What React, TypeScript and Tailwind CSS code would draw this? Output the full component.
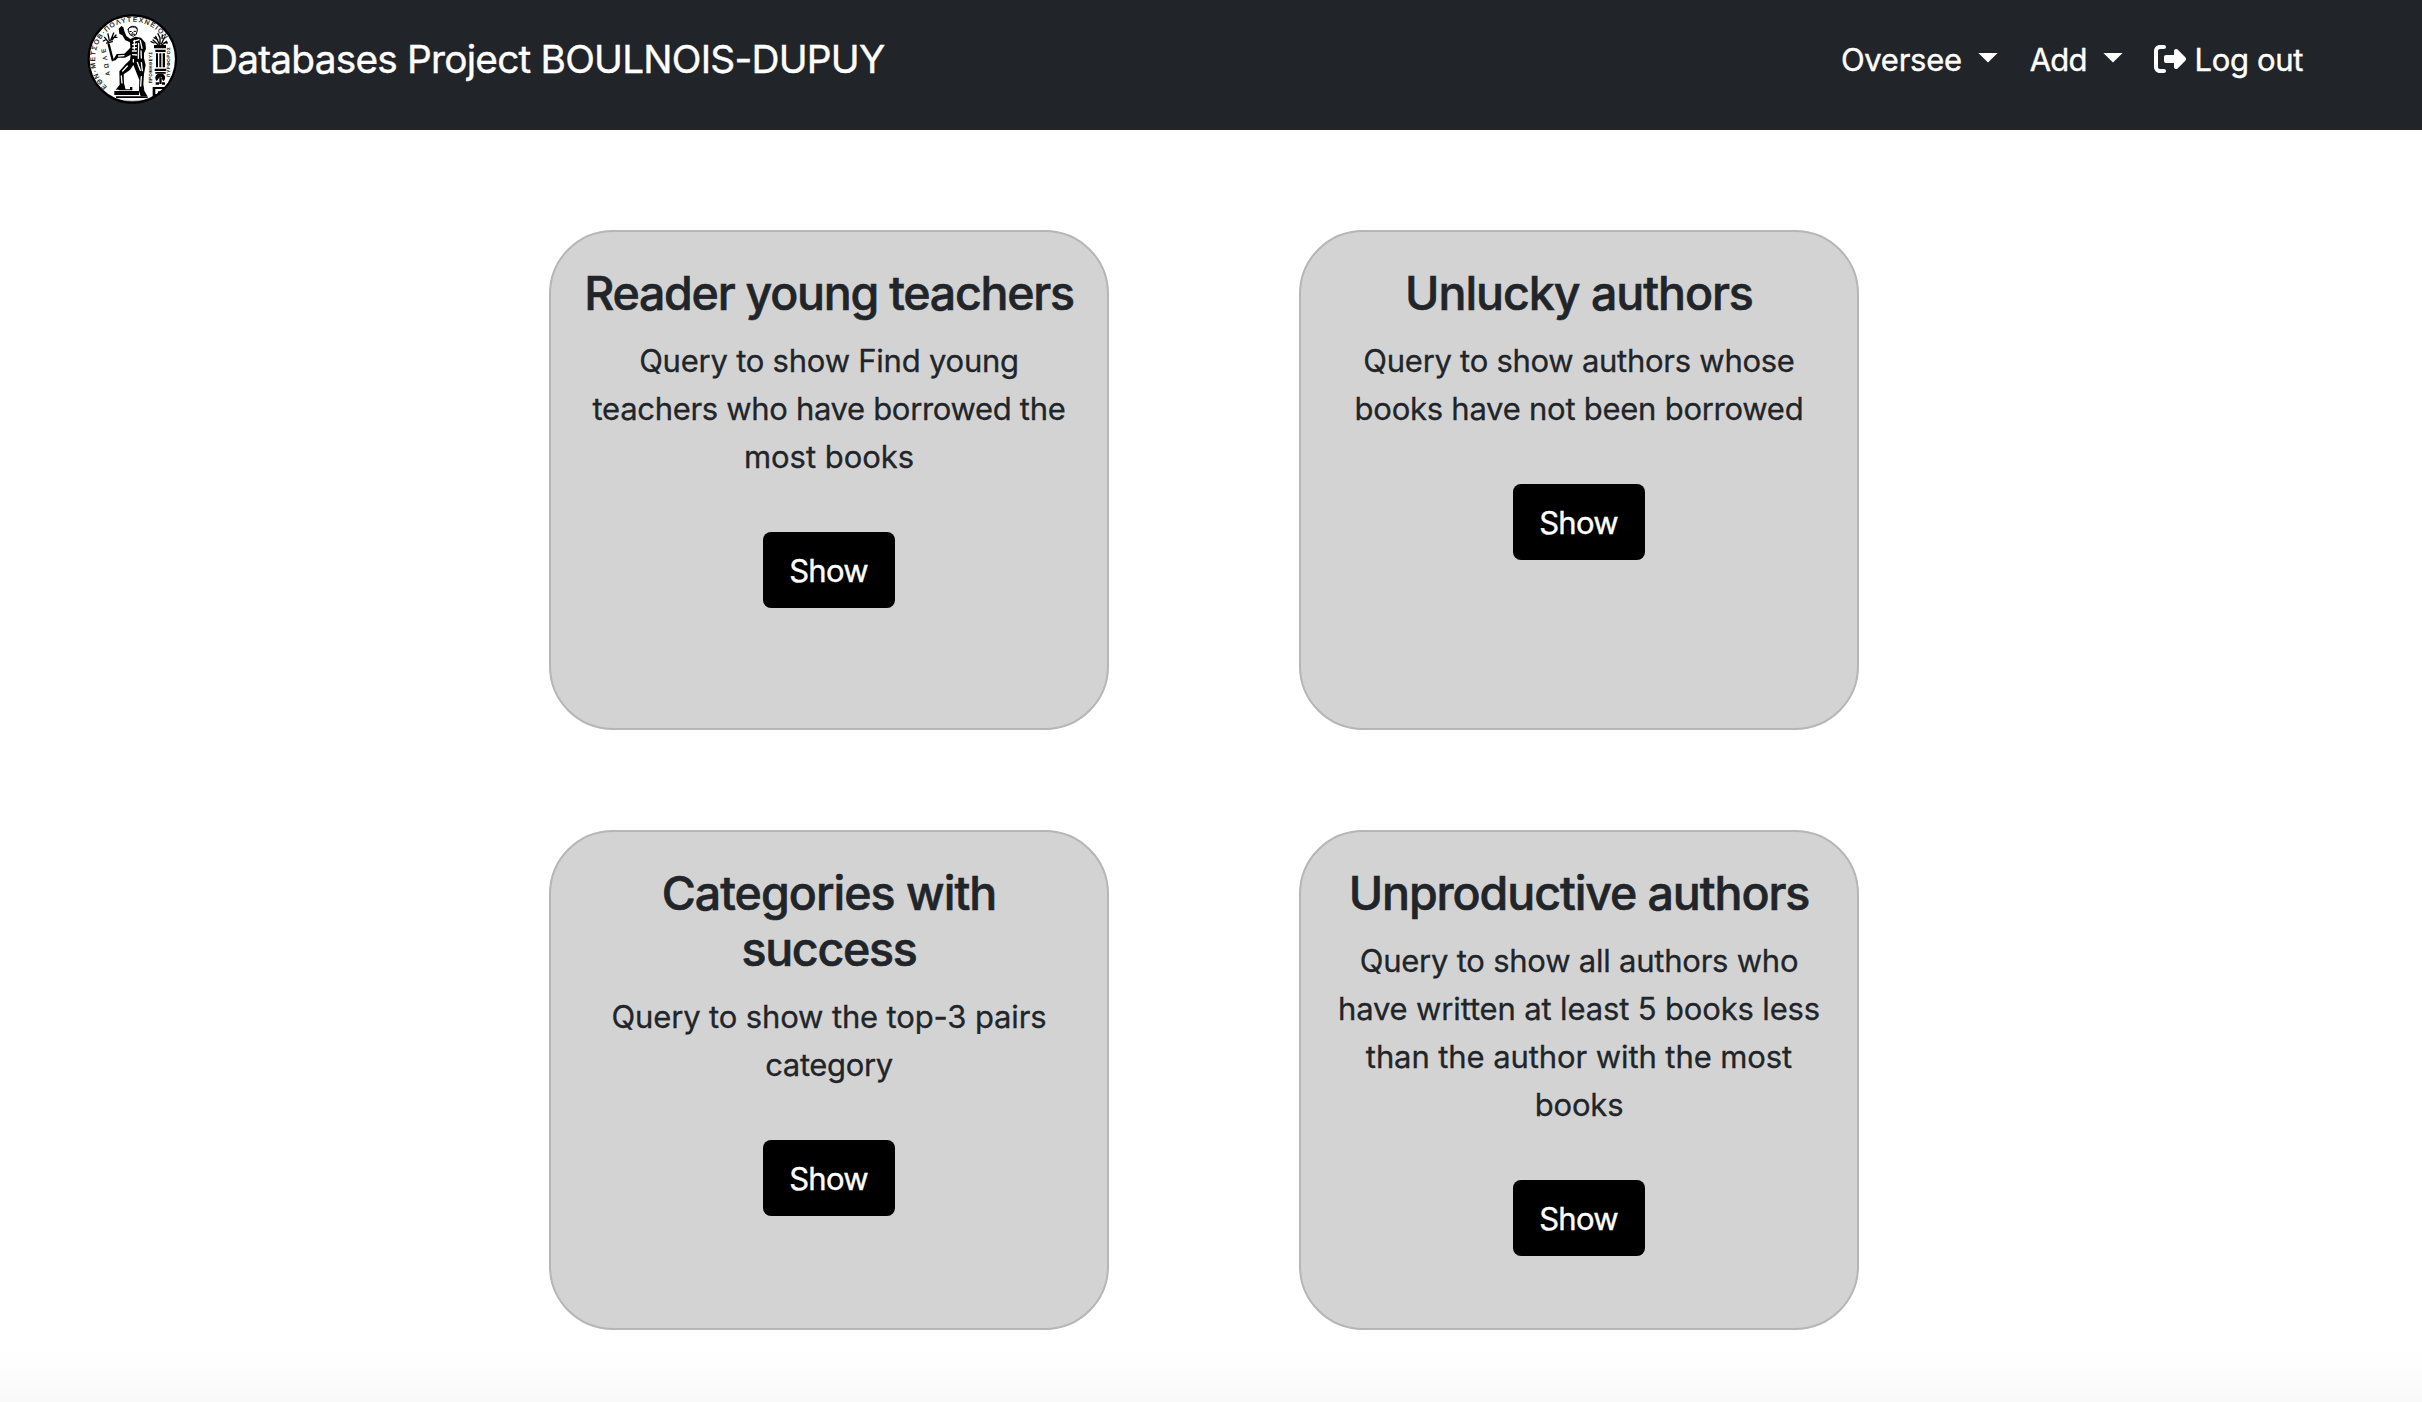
import { FaRightFromBracket } from "react-icons/fa6";

type Line = { text: string; tracking: string };
type Card = { title: Line[]; body: Line[] };

const cards: Card[] = [
  {
    title: [{ text: "Reader young teachers", tracking: "tracking-[-1.25px]" }],
    body: [
      { text: "Query to show Find young", tracking: "tracking-[-0.23px]" },
      { text: "teachers who have borrowed the", tracking: "tracking-[-0.32px]" },
      { text: "most books", tracking: "tracking-[-0.03px]" },
    ],
  },
  {
    title: [{ text: "Unlucky authors", tracking: "tracking-[-1.05px]" }],
    body: [
      { text: "Query to show authors whose", tracking: "tracking-[-0.27px]" },
      { text: "books have not been borrowed", tracking: "tracking-[-0.25px]" },
    ],
  },
  {
    title: [
      { text: "Categories with", tracking: "tracking-[-0.97px]" },
      { text: "success", tracking: "tracking-[-1.27px]" },
    ],
    body: [
      { text: "Query to show the top-3 pairs", tracking: "tracking-[-0.14px]" },
      { text: "category", tracking: "tracking-[-0.37px]" },
    ],
  },
  {
    title: [{ text: "Unproductive authors", tracking: "tracking-[-1.09px]" }],
    body: [
      { text: "Query to show all authors who", tracking: "tracking-[-0.23px]" },
      { text: "have written at least 5 books less", tracking: "tracking-[-0.15px]" },
      { text: "than the author with the most", tracking: "tracking-[-0.09px]" },
      { text: "books", tracking: "tracking-[-0.17px]" },
    ],
  },
];

function Seal() {
  return (
    <svg viewBox="21 39 270 276" className="h-[92px] w-[90px] shrink-0" aria-label="University seal">
      <defs>
        <path id="ring" d="M 81 261 A 113 113 0 1 1 259 128" />
        <clipPath id="disc">
          <circle cx="157" cy="177" r="130" />
        </clipPath>
      </defs>
      <circle cx="157" cy="177" r="131" fill="#fff" stroke="#000" strokeWidth="6.5" />
      <g clipPath="url(#disc)">
        <g fill="#111" fontFamily="Liberation Sans, sans-serif" stroke="#111" strokeWidth="0.6">
          <text fontSize="20">
            <textPath href="#ring" textLength="385" lengthAdjust="spacing">ΕΘΝ·ΜΕΤΣΟΒ·ΠΟΛΥΤΕΧΝΕΙΟΝ</textPath>
          </text>
          <text fontSize="18" transform="translate(90 226) rotate(-100)" textLength="82">ΑΩΛΕ</text>
          <text fontSize="12" transform="translate(217 250) rotate(-90)" textLength="94">ΠΡΟΜΗΘΕΥΣ</text>
          <text fontSize="13" transform="translate(270 230) rotate(-90)" textLength="88">ΠΥΡΦΟΡΟΣ</text>
        </g>
        {/* torch held in the outstretched hand */}
        <g fill="none" stroke="#000" strokeLinecap="round">
          <path d="M86 133 L98 180" strokeWidth="7" />
          <path d="M80 129 L97 125 M84 125 L74 112 M88 122 L84 102 M92 121 L101 99 M96 120 L108 105 M76 120 L70 123 M98 112 L111 112" strokeWidth="4" />
        </g>
        {/* Prometheus */}
        <path d="M145 86 Q156 74 170 82 L172 90 L169 103 L160 109 L150 104 L145 94 Z" fill="#fff" stroke="#000" strokeWidth="3" />
        <path d="M143 88 Q155 74 172 86 M148 95 L155 94 M161 94 L168 94 M152 102 L166 103 M158 96 L158 100" fill="none" stroke="#000" strokeWidth="3" />
        <path d="M116 86 L124 78 L130 82 L133 93 L139 108 L151 117 L166 110 L183 113 L196 128 L198 146 L192 160 L192 175 L197 195 L192 222 L190 252 L193 272 L202 288 L182 289 L177 273 L178 240 L167 212 L160 195 L150 210 L131 223 L132 250 L137 269 L107 269 L119 254 L118 214 L137 192 L150 180 L152 164 L135 173 L114 173 L105 182 L99 180 L110 162 L133 161 L151 143 L150 127 L136 121 L127 106 L118 101 Z" fill="#000" />
        <g fill="none" stroke="#fff" strokeWidth="4" strokeLinecap="round">
          <path d="M161 124 L177 119 M158 134 L170 132 M181 122 L186 145 M158 144 L169 143 M157 153 L169 153 M158 164 L170 165 M176 130 L175 175 M183 153 L184 174 M163 121 L163 148" />
          <path d="M160 178 L160 186 M172 187 L181 211 M184 188 L187 212 M184 230 L182 258 M142 198 L128 213 M124 228 L126 249 M116 168 L132 167" />
        </g>
        {/* plinth */}
        <path d="M119 259 H132 V268 H150 V261 H157 V271 H116 Z M103 273 H177 V285 H103 Z M108 289 H203 V294 H108 Z" fill="#000" />
        {/* altar with flames */}
        <g fill="none" stroke="#000" strokeWidth="4" strokeLinecap="round">
          <path d="M234 134 L219 120 M238 133 L227 109 M240 132 L240 114 L234 101 M244 132 L253 113 M247 134 L260 124 M222 129 L213 125 M233 119 L222 113 M246 116 L247 105 M252 128 L262 129" />
        </g>
        <path d="M222 135 H258 V145 H222 Z M226 149 H257 V156 H226 Z M228 160 H234 V202 H228 Z M238 160 H244 V202 H238 Z M248 160 H255 V202 H248 Z M224 206 H259 V213 H224 Z M226 216 H257 V221 H226 Z" fill="#000" />
        <path d="M233 221 Q220 231 230 244 L240 230 L251 244 Q261 231 249 221 Z M238 232 H245 V252 H238 Z M227 247 H237 V254 H227 Z M246 247 H255 V254 H246 Z" fill="#000" />
        <path d="M218 290 V261 H254 V267 H226 V283 H234 V274 H247 V280 H240 V290 Z" fill="#000" />
        <path d="M102 299 Q157 309 212 299" fill="none" stroke="#000" strokeWidth="2" />
      </g>
    </svg>
  );
}

function Caret() {
  return (
    <svg viewBox="0 0 20 10" className="mb-[3px] ml-4 h-[10px] w-5 fill-white">
      <path d="M0.4 0 H19.6 L10 9.6 Z" />
    </svg>
  );
}

function QueryCard({ title, body }: Card) {
  return (
    <section className="flex h-[500px] w-[560px] flex-col items-center rounded-[64px] border-2 border-[#b6b6b6] bg-[#d3d3d3] pt-[33px] text-center whitespace-nowrap text-[#212529]">
      <h4 className="text-[46.5px] leading-[56px] font-medium [-webkit-text-stroke:0.6px_currentColor]">
        {title.map((l) => (
          <span key={l.text} className={`block ${l.tracking}`}>{l.text}</span>
        ))}
      </h4>
      <p className="mt-4 text-[31px] leading-[48px] [-webkit-text-stroke:0.3px_currentColor]">
        {body.map((l) => (
          <span key={l.text} className={`block ${l.tracking}`}>{l.text}</span>
        ))}
      </p>
      <button className="mt-[51px] h-[76px] w-[132px] shrink-0 rounded-lg bg-black pt-[2px] pr-px text-[31px] leading-[48px] tracking-[-0.75px] text-white [-webkit-text-stroke:0.4px_currentColor]">
        Show
      </button>
    </section>
  );
}

export default function App() {
  return (
    <div className="flex h-[1402px] w-[2422px] flex-col overflow-hidden bg-white font-['Inter',sans-serif]">
      <nav className="flex h-[130px] shrink-0 items-start justify-between bg-[#212529] pt-3 pr-[119px] pl-[87px] whitespace-nowrap text-white [-webkit-text-stroke:0.4px_currentColor]">
        <a className="flex h-[93px] items-center">
          <Seal />
          <span className="ml-[33px] text-[38.8px] leading-[60px] tracking-[-0.78px]">Databases Project BOULNOIS-DUPUY</span>
        </a>
        <div className="flex h-[95px] items-center text-[31px] leading-[48px]">
          <span className="tracking-[-0.28px]">Oversee</span>
          <Caret />
          <span className="ml-8 tracking-[-0.83px]">Add</span>
          <Caret />
          <FaRightFromBracket className="mb-[2px] ml-[31px] size-8" />
          <span className="ml-[9px] tracking-[-0.36px]">Log out</span>
        </div>
      </nav>
      <main className="grid shrink-0 grid-cols-[560px_560px] gap-x-[190px] gap-y-[100px] pt-[100px] pl-[549px]">
        {cards.map((c) => (
          <QueryCard key={c.title[0].text} {...c} />
        ))}
      </main>
      <footer className="mt-5 flex-1 bg-gradient-to-b from-white to-[#f9f9f9]" />
    </div>
  );
}
